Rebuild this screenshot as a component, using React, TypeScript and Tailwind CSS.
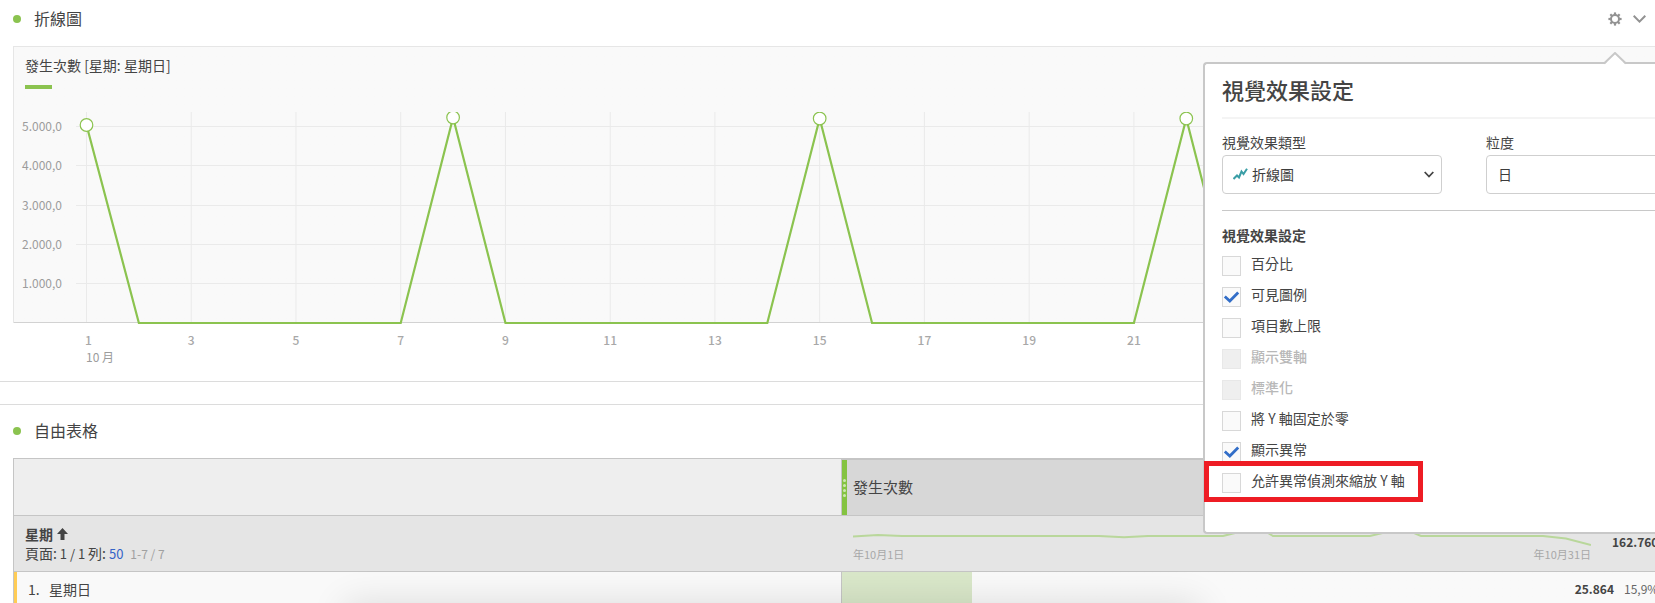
import React from "react";

const DAYS = 30;
const DAY_WIDTH = 52.37;
const ORIGIN_X = 73.5;
const BASELINE = 211;

const peaks: Record<number, number> = { 1: 13, 8: 5.5, 15: 6.5, 22: 6.5, 29: 6.5 };
const dayX = (day: number) => ORIGIN_X + (day - 1) * DAY_WIDTH;
const days = Array.from({ length: DAYS }, (_, i) => i + 1);
const yTicks = [
  { label: "5.000,0", y: 14.5 },
  { label: "4.000,0", y: 53.5 },
  { label: "3.000,0", y: 93.5 },
  { label: "2.000,0", y: 132.5 },
  { label: "1.000,0", y: 171.5 },
];

const options = [
  { id: "percent", label: "百分比" },
  { id: "legend", label: "可見圖例", checked: true },
  { id: "limit", label: "項目數上限" },
  { id: "dual", label: "顯示雙軸", disabled: true },
  { id: "normalize", label: "標準化", disabled: true },
  { id: "anchor", label: "將 Y 軸固定於零" },
  { id: "anomalies", label: "顯示異常", checked: true },
  { id: "scale", label: "允許異常偵測來縮放 Y 軸", highlighted: true },
];

function Heading({ children }: { children: React.ReactNode }) {
  return (
    <div className="flex items-center gap-[13px]">
      <span className="size-2 rounded-full bg-[#8bc34f]" />
      <h2 className="pb-[2px] text-base leading-6 text-[#444]">{children}</h2>
    </div>
  );
}

function GearIcon() {
  return (
    <svg className="size-[14px]" viewBox="0 0 14 14" fill="none" stroke="#929292">
      <circle cx="7" cy="7" r="4" strokeWidth="2" />
      {[0, 45, 90, 135, 180, 225, 270, 315].map((a) => (
        <path key={a} d="M7 2.8V0.4" strokeWidth="2.2" transform={`rotate(${a} 7 7)`} />
      ))}
    </svg>
  );
}

function LineChart() {
  return (
    <svg className="block h-64 w-full" role="img" aria-label="發生次數">
      {yTicks.map((t) => (
        <g key={t.label}>
          <line x1="63" x2="100%" y1={t.y} y2={t.y} stroke="#eaeaea" />
          <text x="49" y={t.y + 4} textAnchor="end" fontSize="12" fill="#9c9c9c">
            {t.label}
          </text>
        </g>
      ))}
      {days
        .filter((d) => d % 2 === 1)
        .map((d) => (
          <g key={d}>
            <line x1={dayX(d)} x2={dayX(d)} y1="0" y2={BASELINE} stroke="#eaeaea" />
            <text
              x={dayX(d) + (d === 1 ? 2 : 0)}
              y="233"
              textAnchor="middle"
              fontSize="12"
              fontWeight="500"
              fill="#a8a8a8"
            >
              {d}
            </text>
          </g>
        ))}
      <text x="73" y="250" fontSize="12" fill="#9c9c9c">
        10 月
      </text>
      <line x1="0" x2="100%" y1="210.5" y2="210.5" stroke="#d2d2d2" />
      <polyline
        points={days.map((d) => `${dayX(d)},${peaks[d] ?? BASELINE}`).join(" ")}
        fill="none"
        stroke="#8bc34f"
        strokeWidth="2.2"
      />
      {Object.entries(peaks).map(([d, y]) => (
        <circle key={d} cx={dayX(Number(d))} cy={y} r="6.3" fill="#fff" stroke="#8bc34f" strokeWidth="1.2" />
      ))}
    </svg>
  );
}

function Sparkline() {
  return (
    <svg
      className="block h-6 w-full"
      viewBox="0 0 738 24"
      preserveAspectRatio="none"
      fill="none"
      stroke="#b9d79b"
      strokeWidth="2"
    >
      <path d="M0 14.500L25 13L49 14H246L271 15.300L295 14H370L394 8H410L420 14H517L542 8H554L568 14H690L713 16.500L738 23" />
    </svg>
  );
}

function Option({ id, label, checked, disabled, highlighted }: (typeof options)[number]) {
  return (
    <div className="relative flex h-[31px] items-start gap-[10px]">
      <span className="relative mt-[5px] h-5 w-[19px]">
        <input
          id={id}
          type="checkbox"
          defaultChecked={checked}
          disabled={disabled}
          className="peer block h-5 w-[19px] appearance-none border border-[#d8d8d8] bg-[#fafafa] disabled:border-[#e8e8e8] disabled:bg-[#efefef]"
        />
        <svg
          className="pointer-events-none absolute inset-0 hidden h-5 w-[19px] peer-checked:block"
          viewBox="0 0 19 20"
          fill="none"
          stroke="#326ec8"
          strokeWidth="2.8"
        >
          <path d="M2.800 9.500L7.800 14L16.200 5.500" />
        </svg>
      </span>
      <label
        htmlFor={id}
        className={
          disabled
            ? "text-sm leading-6 font-medium text-[#b8b8b8]"
            : "text-sm leading-6 text-[#444]"
        }
      >
        {label}
      </label>
      {highlighted && (
        <span className="pointer-events-none absolute -top-[7px] -left-[18px] h-[41px] w-[219px] border-5 border-[#ee1c24]" />
      )}
    </div>
  );
}

function SettingsPopover() {
  return (
    <div className="absolute top-[62px] right-0 z-10 h-[472px] w-[452px] rounded-l border-2 border-r-0 border-[#c8c8c8] bg-white pl-[17px]">
      <svg className="absolute -top-[12px] right-[28px] h-[13px] w-6" viewBox="0 0 24 13">
        <path d="M1 13L12 1.500L23 13Z" fill="#fff" />
        <path d="M1 11.500L12 1L23 11.500" fill="none" stroke="#c8c8c8" strokeWidth="2" />
      </svg>
      <h3 className="flex h-[55px] items-center border-b-2 border-[#f4f4f4] pb-[3px] text-[22px] leading-8 font-medium text-[#444]">
        視覺效果設定
      </h3>
      <div className="flex gap-11 border-b border-[#c8c8c8] pt-3 pb-4 text-sm text-[#444]">
        <div className="w-[220px] shrink-0">
          <label htmlFor="type" className="block pb-[2px] leading-[22px]">
            視覺效果類型
          </label>
          <div className="relative">
            <select
              id="type"
              className="h-[39px] w-full appearance-none rounded-[4px] border border-[#cfcfcf] bg-white pb-[2px] pl-[29px] text-[#3c3c3c]"
            >
              <option>折線圖</option>
            </select>
            <svg
              className="pointer-events-none absolute top-[13px] left-[11px] h-3 w-[15px]"
              viewBox="0 0 15 12"
              fill="none"
              stroke="#3a9ea6"
              strokeWidth="2"
            >
              <path d="M0.500 11L4 7.500L6 9.500L8.500 3.500L10.500 6L14 0.800" />
            </svg>
            <svg
              className="pointer-events-none absolute top-[16px] right-[8px] h-[7px] w-[10px]"
              viewBox="0 0 10 7"
              fill="none"
              stroke="#444"
              strokeWidth="1.8"
            >
              <path d="M0.700 1L5 5.500L9.300 1" />
            </svg>
          </div>
        </div>
        <div className="w-[220px] shrink-0">
          <label htmlFor="granularity" className="block pb-[2px] leading-[22px]">
            粒度
          </label>
          <select
            id="granularity"
            className="h-[39px] w-full appearance-none rounded-[4px] border border-[#cfcfcf] bg-white pb-[2px] pl-[11px] text-[#3c3c3c]"
          >
            <option>日</option>
          </select>
        </div>
      </div>
      <fieldset className="pt-3">
        <legend className="float-left mb-1 w-full text-sm leading-6 font-bold text-[#444]">
          視覺效果設定
        </legend>
        <div className="clear-both">
          {options.map((o) => (
            <Option key={o.id} {...o} />
          ))}
        </div>
      </fieldset>
    </div>
  );
}

export default function App() {
  return (
    <main className="relative h-screen overflow-hidden bg-white font-['Noto_Sans_CJK_TC',sans-serif] text-[#444]">
      <section className="border-b border-[#dcdcdc] pl-[13px]">
        <header className="flex h-[37px] items-center justify-between pr-[9px]">
          <Heading>折線圖</Heading>
          <div className="flex items-center gap-[11px]">
            <button aria-label="設定">
              <GearIcon />
            </button>
            <button aria-label="展開">
              <svg className="h-2 w-[13px]" viewBox="0 0 13 8" fill="none" stroke="#929292" strokeWidth="2">
                <path d="M0.700 0.800L6.500 6.600L12.300 0.800" />
              </svg>
            </button>
          </div>
        </header>
        <div className="mt-[9px] bg-linear-to-b from-[#f9f9f9] from-[277px] to-white to-[277px] pb-[13px]">
          <div className="relative h-[66px] border-t border-l border-[#e6e6e6] pt-[6px] pl-[11px]">
            <p className="text-sm leading-6">發生次數 [星期: 星期日]</p>
            <div className="mt-2 h-1 w-[27px] bg-[#8bc34f]" />
          </div>
          <div className="relative">
            <span className="absolute top-0 left-0 h-[211px] w-px bg-[#e6e6e6]" />
            <LineChart />
          </div>
        </div>
      </section>

      <section className="mt-[22px] border-t border-[#dcdcdc] pl-[13px]">
        <header className="flex h-[53px] items-center pb-[2px]">
          <Heading>自由表格</Heading>
        </header>
        <table className="w-full table-fixed border-separate border-spacing-0 border-t border-l border-[#c5c5c5] text-left">
          <colgroup>
            <col className="w-[827px]" />
            <col />
          </colgroup>
          <thead>
            <tr className="h-[57px]">
              <td className="border-b border-[#c5c5c5] bg-[#eee]" />
              <th className="border-t border-b border-l border-[#c5c5c5] bg-[#d7d7d7] p-0 font-normal">
                <div className="flex h-[55px] items-center gap-[6px]">
                  <span className="flex h-full w-[5px] flex-col items-center justify-center gap-[2px] bg-[#84c341]">
                    {[0, 1, 2, 3].map((n) => (
                      <i key={n} className="size-[3px] rounded-full bg-[#cfe8b2]" />
                    ))}
                  </span>
                  <span className="pb-[2px] text-[15px] leading-6">發生次數</span>
                </div>
              </th>
            </tr>
            <tr className="h-14">
              <th className="border-b border-[#c5c5c5] bg-[#e5e5e5] p-0 pl-[11px] text-sm leading-[19px] font-normal">
                <div className="flex items-center gap-1 font-bold">
                  星期
                  <svg className="h-3 w-[11px]" viewBox="0 0 11 12" fill="#444">
                    <path d="M5.500 0L11 6H7.500V12H3.500V6H0Z" />
                  </svg>
                </div>
                <div>
                  頁面:<span className="text-[13px]"> 1 / 1 </span>列:
                  <span className="text-[13px]">
                    {" "}
                    <a href="#rows" className="text-[#3464c8]">
                      50
                    </a>
                  </span>
                  <span className="ml-[7px] text-xs text-[#a0a0a0]">1-7 / 7</span>
                </div>
              </th>
              <td className="overflow-hidden border-b border-[#c5c5c5] bg-[#e5e5e5] p-0 pl-[12px]">
                <div className="flex items-center gap-[21px] pb-1">
                  <div className="min-w-0 flex-1">
                    <Sparkline />
                    <div className="flex justify-between text-[11px] leading-4 text-[#a8a8a8]">
                      <span>年10月1日</span>
                      <span>年10月31日</span>
                    </div>
                  </div>
                  <span className="w-[43px] text-xs leading-6 font-bold">162.760</span>
                </div>
              </td>
            </tr>
          </thead>
          <tbody>
            <tr className="h-[35px]">
              <th className="border-l-3 border-[#fc5] bg-[#f9f9f9] p-0 pb-[2px] pl-[11px] text-sm font-normal">
                <span className="inline-block w-[21px]">1.</span>星期日
              </th>
              <td className="overflow-hidden border-l border-[#c5c5c5] bg-[#f9f9f9] bg-linear-to-r from-[#d9e7c9] from-[130px] to-[#f9f9f9] to-[130px] p-0 pb-[2px]">
                <div className="flex justify-end gap-[10px] text-xs whitespace-nowrap">
                  <span className="font-bold">25.864</span>
                  <span className="w-[31px] text-[#666]">15,9%</span>
                </div>
              </td>
            </tr>
          </tbody>
        </table>
      </section>

      <div className="absolute top-full right-[455px] left-[345px] h-10 shadow-[0_0_36px_rgba(0,0,0,0.12)]" />
      <SettingsPopover />
    </main>
  );
}
